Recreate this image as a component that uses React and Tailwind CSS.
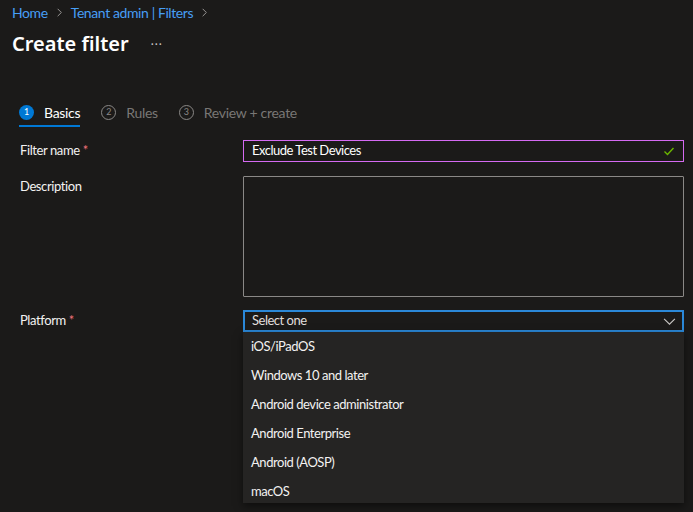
import React from "react";

const platforms = [
  "iOS/iPadOS",
  "Windows 10 and later",
  "Android device administrator",
  "Android Enterprise",
  "Android (AOSP)",
  "macOS",
];

function Chevron({ className }) {
  return (
    <svg className={className} viewBox="0 0 12 12" fill="none" stroke="currentColor" strokeWidth="1">
      <path d="M4 2l4 4-4 4" />
    </svg>
  );
}

function Step({ n, label, active }) {
  return (
    <div className="flex flex-col">
      <div className="flex items-center gap-[10px] h-[26px]">
        <span
          className={
            active
              ? "w-[15px] h-[15px] rounded-full bg-[#0078d4] text-white text-[9px] flex items-center justify-center"
              : "w-[15px] h-[15px] rounded-full border border-[#8a8886] text-[#8a8886] text-[9px] flex items-center justify-center"
          }
        >
          {n}
        </span>
        <span className={active ? "text-[14px] tracking-[-0.3px] text-white" : "text-[14px] tracking-[-0.3px] text-[#797775]"}>{label}</span>
      </div>
      <div className={active ? "h-[2px] bg-[#0078d4]" : "h-[2px]"} />
    </div>
  );
}

function Label({ children, required }) {
  return (
    <div className="w-[223px] text-[13px] tracking-[-0.4px] text-[#f3f2f1]">
      {children}
      {required && <span className="text-[#f1707b] ml-[3px]">*</span>}
    </div>
  );
}

export default function App() {
  return (
    <div
      className="w-[693px] h-[512px] overflow-hidden bg-[#1b1a19] text-white"
      style={{ fontFamily: "Lato, 'Noto Sans', sans-serif" }}
    >
      <div className="px-[12px] pt-[7px] flex items-center gap-[6px] text-[14px] tracking-[-0.4px] text-[#479ef5] h-[18px]">
        <span>Home</span>
        <Chevron className="w-[11px] h-[11px] text-[#a19f9d]" />
        <span>Tenant admin | Filters</span>
        <Chevron className="w-[11px] h-[11px] text-[#a19f9d]" />
      </div>

      <div className="px-[12px] mt-[13px] flex items-center h-[26px]">
        <h1 className="text-[20px] font-semibold leading-none" style={{ fontFamily: "'Noto Sans', sans-serif" }}>Create filter</h1>
        <span className="ml-[22px] text-[13px] text-[#c8c6c4] tracking-[1px] -mt-[6px]">...</span>
      </div>

      <div className="px-[19px] mt-[42px] flex gap-[21px]">
        <Step n="1" label="Basics" active />
        <Step n="2" label="Rules" />
        <Step n="3" label="Review + create" />
      </div>

      <div className="pl-[20px] pr-[9px] mt-[13px]">
        <div className="flex items-center h-[22px]">
          <Label required>Filter name</Label>
          <div className="flex-1 h-[22px] border border-[#d56af2] flex items-center justify-between px-[8px]">
            <span className="text-[13px] tracking-[-0.5px] text-white">Exclude Test Devices</span>
            <svg className="w-[12px] h-[12px] text-[#6bb700]" viewBox="0 0 12 12" fill="none" stroke="currentColor" strokeWidth="1.4">
              <path d="M1.5 6.5l3 3 6-6.5" />
            </svg>
          </div>
        </div>

        <div className="flex items-start mt-[14px]">
          <div className="pt-[1px]">
            <Label>Description</Label>
          </div>
          <div className="flex-1 h-[121px] border border-[#8a8886] rounded-[1px]" />
        </div>

        <div className="flex items-center mt-[13px] h-[22px]">
          <Label required>Platform</Label>
          <div className="flex-1 relative">
            <div className="h-[22px] border-2 border-[#2b88d8] flex items-center justify-between pl-[7px] pr-[6px]">
              <span className="text-[13px] tracking-[-0.5px] text-[#e1dfdd]">Select one</span>
              <svg className="w-[13px] h-[13px] text-[#c8c6c4]" viewBox="0 0 12 12" fill="none" stroke="currentColor" strokeWidth="1">
                <path d="M1 3.5l5 5 5-5" />
              </svg>
            </div>
            <div className="absolute left-0 right-0 top-[22px] h-[171px] bg-[#252423] shadow-[0_3px_8px_rgba(0,0,0,0.5)] overflow-hidden">
              {platforms.map((p) => (
                <div key={p} className="h-[29px] flex items-center px-[8px] text-[13px] tracking-[-0.45px] text-[#f3f2f1]">
                  {p}
                </div>
              ))}
            </div>
          </div>
        </div>
      </div>
    </div>
  );
}
